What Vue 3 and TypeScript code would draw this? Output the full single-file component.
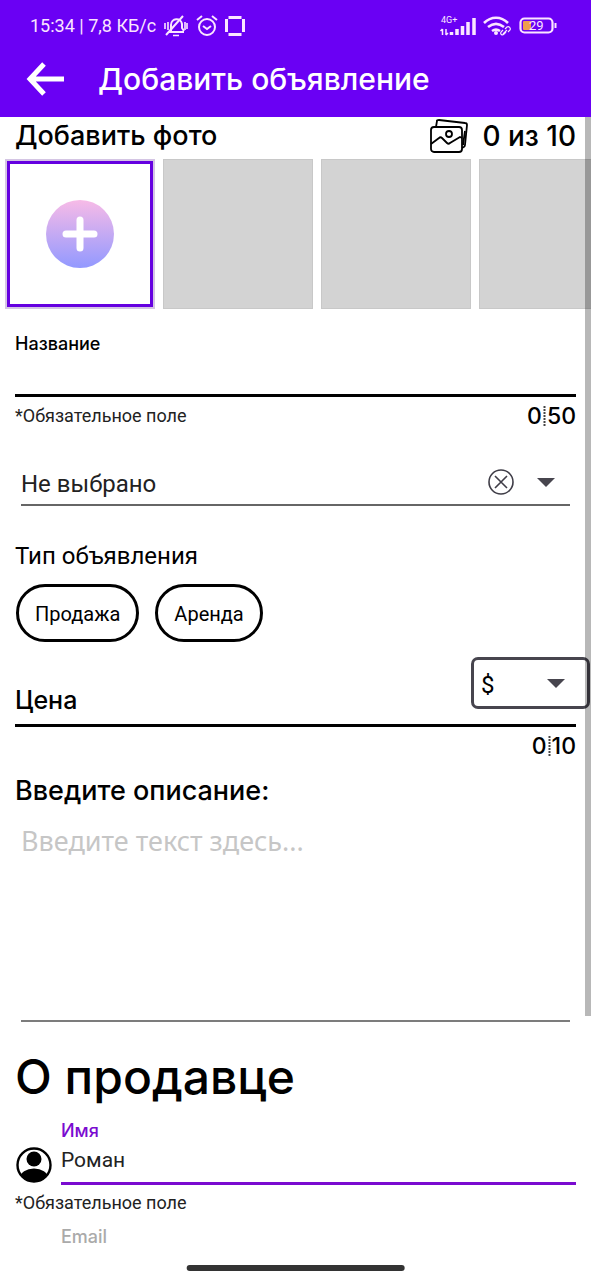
<script setup lang="ts">
import { ref } from 'vue'

const photoSlots = [1, 2, 3]
const adTypes = ['Продажа', 'Аренда']
const adType = ref('')
const title = ref('')
const category = ref('')
const price = ref('')
const currency = ref('$')
const description = ref('')
const sellerName = ref('Роман')
const email = ref('')
</script>

<template>
  <div class="screen">
    <header class="top">
      <div class="status">
        <span class="clock">15:34 | 7,8 КБ/с</span>
        <svg class="bell" width="26" height="24" viewBox="0 0 26 24" fill="none" stroke="currentColor" stroke-width="2">
          <path d="M6 18h15M8 17V11c0-7 10-8 11-1v4l2 3" />
          <path d="M3 21 20 2" />
          <path d="M10 21.500h6M2 9v6M24 9v6M5 8v8M22 8v8" stroke-width="1.600" />
        </svg>
        <svg class="alarm" width="22" height="22" viewBox="0 0 22 22" fill="none" stroke="currentColor" stroke-width="2">
          <circle cx="11" cy="12" r="8" />
          <path d="M1 5l5-4M21 5l-5-4M7 11l4 3 4-3" />
        </svg>
        <svg class="square" width="20" height="20" viewBox="0 0 20 20" fill="none" stroke="currentColor" stroke-width="3">
          <path d="M3.500 1.500h13M3.500 18.500h13M1.500 3v13M18.500 3v13" />
        </svg>
        <span class="spacer"></span>
        <svg width="38" height="22" viewBox="0 0 38 22" role="img" aria-label="Сигнал 4G+">
          <text x="2" y="8" font-family="Roboto, sans-serif" font-size="9" fill="currentColor">4G+</text>
          <path d="M3.500 20v-6M1.500 16l2-2M7 14v6M7 20l2-2" fill="none" stroke="currentColor" stroke-width="1.500" />
          <path d="M12.500 20v-3M18 20v-6M23.500 20V11M29 20V7M35 20V3" stroke="currentColor" stroke-width="3.500" />
        </svg>
        <svg class="wifi" width="28" height="20" viewBox="0 0 28 20" fill="none" stroke="currentColor">
          <path d="M1 7c7-7 17-7 24 0M5 11c5-4 11-4 16 0M9 15c3-2 5-2 8 0" stroke-width="2.600" />
          <circle cx="13" cy="17" r="2" fill="currentColor" stroke="none" />
          <path d="M22 13l2-2c2-1 4 1 3 3l-2 2M24 14l-4 4M23 16l-2 2c-2 2-4 0-3-2l2-2" stroke-width="1.200" />
        </svg>
        <svg class="battery" width="38" height="18" viewBox="0 0 38 18" role="img" aria-label="Заряд 29%">
          <rect x="1.500" y="1.500" width="32" height="14" rx="4" fill="none" stroke="currentColor" stroke-width="2.200" />
          <rect x="4" y="4" width="8" height="9" rx="1" fill="#ee9d4e" />
          <path d="M36.500 6v5" stroke="currentColor" stroke-width="2" />
          <text x="10" y="13" font-family="Roboto, sans-serif" font-size="13" fill="currentColor">29</text>
        </svg>
      </div>
      <div class="bar">
        <button class="back" type="button" aria-label="Назад">
          <svg width="38" height="34" viewBox="0 0 38 34" fill="none" stroke="currentColor" stroke-width="5">
            <path d="M38 17H4M18 2 4 17l14 15" />
          </svg>
        </button>
        <h1>Добавить объявление</h1>
      </div>
    </header>

    <main>
      <section class="photo-head">
        <h2>Добавить фото</h2>
        <svg width="38" height="34" viewBox="0 0 38 34" fill="none" stroke="#000" stroke-width="1.800">
          <path d="M6 8 7 2c0-1 1-1 2-1l26 3c1 0 2 1 2 2l-2 20c0 2-1 2-3 3" />
          <rect x="1" y="8" width="31" height="25" rx="3" />
          <path d="M35 12l-2 14M1 25l8-6c1-1 2-1 3 0l5 5c1 1 2 1 3 0l10-6 2 1" />
          <circle cx="19" cy="15" r="3" />
        </svg>
        <span class="photo-count">0 из 10</span>
      </section>

      <div class="photos">
        <button class="photo add" type="button" aria-label="Добавить фото">
          <svg width="68" height="68" viewBox="0 0 68 68">
            <defs>
              <linearGradient id="plusFill" x1="0" y1="0" x2="0" y2="1">
                <stop offset="0" stop-color="#f7bbe7" />
                <stop offset="1" stop-color="#9299ff" />
              </linearGradient>
            </defs>
            <circle cx="34" cy="34" r="34" fill="url(#plusFill)" />
            <path d="M34 20v28M20 34h28" stroke="#fff" stroke-width="7" stroke-linecap="round" />
          </svg>
        </button>
        <div v-for="slot in photoSlots" :key="slot" class="photo"></div>
      </div>

      <form class="form" @submit.prevent>
        <div class="field name-field">
          <label for="title">Название</label>
          <input id="title" v-model="title" type="text" maxlength="50" />
        </div>
        <div class="hint-row">
          <span class="hint">*Обязательное поле</span>
          <span class="counter">
            0<svg width="5" height="20" viewBox="0 0 5 20" aria-hidden="true">
              <path d="M2.500 0v20" stroke="#444" stroke-width="2" stroke-dasharray="2 1" />
            </svg>50
          </span>
        </div>

        <div class="category">
          <select v-model="category" aria-label="Категория">
            <option value="">Не выбрано</option>
          </select>
          <button class="clear" type="button" aria-label="Очистить" @click="category = ''">
            <svg width="26" height="26" viewBox="0 0 26 26" fill="none" stroke="#3f3d47" stroke-width="1.600">
              <circle cx="13" cy="13" r="12" />
              <path d="M7 7l12 12M19 7 7 19" />
            </svg>
          </button>
          <svg class="caret" width="18" height="9" viewBox="0 0 18 9"><path d="M0 0h18L9 9z" fill="#47454e" /></svg>
        </div>

        <h3>Тип объявления</h3>
        <div class="types">
          <button
            v-for="kind in adTypes"
            :key="kind"
            type="button"
            :aria-pressed="adType === kind"
            @click="adType = kind"
          >
            {{ kind }}
          </button>
        </div>

        <div class="price">
          <label for="price">Цена</label>
          <input id="price" v-model="price" type="text" inputmode="numeric" maxlength="10" />
          <div class="currency">
            <select v-model="currency" aria-label="Валюта">
              <option>$</option>
            </select>
            <svg class="caret" width="18" height="9" viewBox="0 0 18 9"><path d="M0 0h18L9 9z" fill="#47454e" /></svg>
          </div>
        </div>
        <div class="hint-row price-hint">
          <span class="counter">
            0<svg width="5" height="20" viewBox="0 0 5 20" aria-hidden="true">
              <path d="M2.500 0v20" stroke="#444" stroke-width="2" stroke-dasharray="2 1" />
            </svg>10
          </span>
        </div>

        <label class="desc-label" for="description">Введите описание:</label>
        <textarea id="description" v-model="description" placeholder="Введите текст здесь..."></textarea>

        <h2 class="seller">О продавце</h2>
        <div class="person">
          <svg width="36" height="36" viewBox="0 0 36 36">
            <clipPath id="faceClip"><circle cx="18" cy="18" r="17" /></clipPath>
            <circle cx="18" cy="18" r="16.500" fill="#fff" stroke="#000" stroke-width="2.400" />
            <circle cx="18" cy="12" r="7.500" />
            <ellipse cx="18" cy="31" rx="14" ry="9.500" clip-path="url(#faceClip)" />
          </svg>
          <div class="field seller-field">
            <label for="seller">Имя</label>
            <input id="seller" v-model="sellerName" type="text" />
          </div>
        </div>
        <span class="hint">*Обязательное поле</span>
        <input v-model="email" class="email" type="email" placeholder="Email" aria-label="Email" />
      </form>
      <div class="scrollbar"></div>
    </main>
    <div class="home"></div>
  </div>
</template>

<style>
body {
  margin: 0;
}
</style>

<style scoped>
* {
  box-sizing: border-box;
}
.screen {
  position: relative;
  display: flex;
  flex-direction: column;
  height: 100vh;
  overflow: hidden;
  background: #fff;
  color: #000;
  font-family: Inter, "Open Sans", sans-serif;
}
svg {
  flex: none;
}
h1,
h2,
h3 {
  margin: 0;
  font-weight: 500;
}
button,
input,
select,
textarea {
  margin: 0;
  padding: 0;
  border: 0;
  border-radius: 0;
  outline: 0;
  background: none;
  color: inherit;
  font-family: Roboto, sans-serif;
  appearance: none;
}
.top {
  flex: none;
  background: #6a00f4;
  color: #fff;
}
.status {
  display: flex;
  align-items: center;
  height: 50px;
  padding: 2px 34px 0 30px;
  color: #fbe5ff;
}
.clock {
  font: 18px/24px Roboto, sans-serif;
}
.bell {
  margin-left: 7px;
}
.alarm {
  margin-left: 7px;
}
.square {
  margin-left: 7px;
}
.spacer {
  flex: 1;
}
.wifi {
  margin-left: 6px;
}
.battery {
  margin-left: 8px;
}
.bar {
  display: flex;
  align-items: center;
  gap: 34px;
  height: 67px;
  padding: 0 26px 9px;
}
.back {
  display: flex;
}
h1 {
  font-size: 30px;
  line-height: 36px;
  white-space: nowrap;
}
main {
  position: relative;
  flex: 1;
  min-height: 0;
  overflow: hidden;
}
.photo-head {
  display: flex;
  align-items: center;
  gap: 14px;
  height: 42px;
  padding: 0 15px 4px;
  line-height: 32px;
}
.photo-head h2 {
  flex: 1;
  font-size: 27px;
}
.photo-count {
  font-size: 28px;
  font-weight: 500;
}
.photos {
  display: flex;
  gap: 8px;
  padding-left: 5px;
  overflow: hidden;
}
.photo {
  flex: none;
  width: 150px;
  height: 150px;
  border: 1px solid #c8c8c8;
  background: #d3d3d3;
}
.add {
  display: flex;
  align-items: center;
  justify-content: center;
  border: 2px solid #d4c5e4;
  background: #fff;
  box-shadow: inset 0 0 0 3px #6500e0;
}
.form {
  display: flex;
  flex-direction: column;
  padding: 19px 15px 0;
}
.field {
  display: flex;
  flex-direction: column;
}
.field label {
  font-size: 18px;
  font-weight: 500;
  line-height: 32px;
}
.field input {
  height: 38px;
  border-bottom: 3px solid #000;
  font-size: 20px;
}
.name-field input {
  height: 37px;
}
.hint-row {
  display: flex;
  justify-content: space-between;
  align-items: center;
  height: 37px;
}
.hint {
  font: 18px/36px Roboto, sans-serif;
  color: #222;
}
.counter {
  display: flex;
  align-items: center;
  font-size: 23px;
  font-weight: 500;
  line-height: 24px;
}
.category {
  display: flex;
  align-items: center;
  height: 46px;
  margin: 26px 6px 0;
  padding-right: 15px;
  border-bottom: 2px solid #666;
}
.category select {
  flex: 1;
  align-self: stretch;
  padding-top: 4px;
  font-size: 24px;
  color: #222;
}
.clear {
  display: flex;
  margin-right: 23px;
}
h3 {
  margin-top: 34px;
  font: 24px/32px Roboto, sans-serif;
}
.types {
  display: flex;
  gap: 16px;
  margin-top: 12px;
  padding-left: 1px;
}
.types button {
  height: 58px;
  padding: 1px 16px 0;
  border: 3px solid #000;
  border-radius: 29px;
  font-size: 20px;
}
.price {
  display: flex;
  align-items: flex-end;
  height: 70px;
  margin-top: 15px;
  margin-right: -14px;
  background: linear-gradient(#000, #000) left bottom / calc(100% - 14px) 3px no-repeat;
}
.price label {
  padding-bottom: 11px;
  font-size: 25px;
  font-weight: 500;
  line-height: 32px;
}
.price input {
  flex: 1;
  min-width: 0;
  height: 42px;
  padding-left: 12px;
  font-size: 22px;
}
.currency {
  display: flex;
  align-items: center;
  align-self: flex-start;
  width: 119px;
  height: 52px;
  padding-right: 22px;
  border: 3px solid #47454e;
  border-radius: 7px;
  background: #fff;
}
.currency select {
  flex: 1;
  min-width: 0;
  height: 46px;
  padding: 4px 0 0 7px;
  font-size: 24px;
}
.price-hint {
  justify-content: flex-end;
}
.desc-label {
  margin-top: 11px;
  font-size: 27px;
  font-weight: 500;
  line-height: 32px;
}
textarea {
  height: 208px;
  margin: 7px 6px 0;
  border-bottom: 2px solid #7c7c7c;
  font: 27px/36px "Noto Sans", sans-serif;
  padding-top: 9px;
  resize: none;
}
textarea::placeholder {
  color: #c6c6c6;
}
.seller {
  margin-top: 25px;
  font-size: 48px;
  line-height: 60px;
}
.person {
  display: flex;
  align-items: flex-end;
  gap: 9px;
  margin-top: 12px;
  padding-left: 1px;
}
.person > svg {
  margin-bottom: 2px;
}
.seller-field {
  flex: 1;
}
.seller-field label {
  color: #7a0bd0;
  line-height: 24px;
}
.seller-field input {
  height: 42px;
  padding-bottom: 6px;
  border-color: #7a0bd0;
  font-size: 21px;
  color: #222;
}
.email {
  height: 32px;
  margin-left: 46px;
  font: 500 18px/32px Inter, sans-serif;
}
.email::placeholder {
  color: #aaa;
}
.scrollbar {
  position: absolute;
  top: 0;
  right: 0;
  width: 6px;
  height: 77.3%;
  background: rgba(0, 0, 0, 0.28);
}
.home {
  position: absolute;
  bottom: 9px;
  left: 50%;
  width: 37%;
  height: 6px;
  border-radius: 3px;
  background: #333;
  transform: translateX(-50%);
}
</style>
